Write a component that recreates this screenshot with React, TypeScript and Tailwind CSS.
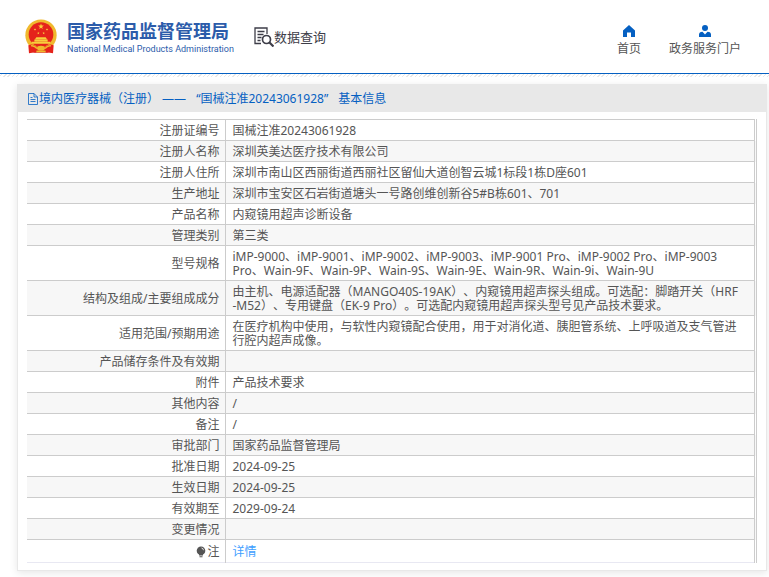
import React from "react";

interface Field {
  label: string;
  value: string;
}

const fields: Field[] = [
  { label: "注册证编号", value: "国械注准20243061928" },
  { label: "注册人名称", value: "深圳英美达医疗技术有限公司" },
  {
    label: "注册人住所",
    value: "深圳市南山区西丽街道西丽社区留仙大道创智云城1标段1栋D座601",
  },
  {
    label: "生产地址",
    value: "深圳市宝安区石岩街道塘头一号路创维创新谷5#B栋601、701",
  },
  { label: "产品名称", value: "内窥镜用超声诊断设备" },
  { label: "管理类别", value: "第三类" },
  {
    label: "型号规格",
    value:
      "iMP-9000、iMP-9001、iMP-9002、iMP-9003、iMP-9001 Pro、iMP-9002 Pro、iMP-9003\nPro、Wain-9F、Wain-9P、Wain-9S、Wain-9E、Wain-9R、Wain-9i、Wain-9U",
  },
  {
    label: "结构及组成/主要组成成分",
    value:
      "由主机、电源适配器（MANGO40S-19AK）、内窥镜用超声探头组成。可选配：脚踏开关（HRF\n-M52）、专用键盘（EK-9 Pro）。可选配内窥镜用超声探头型号见产品技术要求。",
  },
  {
    label: "适用范围/预期用途",
    value:
      "在医疗机构中使用，与软性内窥镜配合使用，用于对消化道、胰胆管系统、上呼吸道及支气管进行腔内超声成像。",
  },
  { label: "产品储存条件及有效期", value: "" },
  { label: "附件", value: "产品技术要求" },
  { label: "其他内容", value: "/" },
  { label: "备注", value: "/" },
  { label: "审批部门", value: "国家药品监督管理局" },
  { label: "批准日期", value: "2024-09-25" },
  { label: "生效日期", value: "2024-09-25" },
  { label: "有效期至", value: "2029-09-24" },
  { label: "变更情况", value: "" },
];

const star = "M0-10 2.4-3.2 9.5-3 3.8 1.3 5.9 8 0 4-5.9 8-3.8 1.3-9.5-3-2.4-3.2Z";

const Emblem: React.FC = () => (
  <svg viewBox="0 0 96 104" className="h-[35px] w-8 shrink-0" aria-hidden="true">
    <path d="M12 72 14 102 Q24 97 34 101 L62 101 Q72 97 82 102 L84 72Z" fill="#d9201c" />
    <circle cx="48" cy="48" r="47" fill="#f0b92e" />
    <circle cx="48" cy="46" r="37" fill="#e5231b" />
    <path d={star} transform="translate(48 22) scale(.9)" fill="#f8cf3c" />
    <path d={star} transform="translate(30 31) scale(.4)" fill="#f8cf3c" />
    <path d={star} transform="translate(66 31) scale(.4)" fill="#f8cf3c" />
    <path d={star} transform="translate(40 42) scale(.4)" fill="#f8cf3c" />
    <path d={star} transform="translate(56 42) scale(.4)" fill="#f8cf3c" />
    <path d="M34 54h28l4 6H30zM28 61h40v6H28zM20 68h56v6H20z" fill="#f8cf3c" />
    <path d="M10 78 Q24 72 34 82 L48 78 62 82 Q72 72 86 78 L84 102 Q74 98 64 101 L62 94 H34 L32 101 Q22 98 12 102Z" fill="#e5231b" />
    <path d="M18 80 Q28 78 36 88 M78 80 Q68 78 60 88" stroke="#f0b92e" strokeWidth="4" fill="none" />
    <ellipse cx="48" cy="87" rx="12" ry="7" fill="#f0b92e" />
    <path d="M34 97h28" stroke="#f0b92e" strokeWidth="5" />
  </svg>
);

const SearchDocIcon: React.FC = () => (
  <svg viewBox="0 0 20 20" className="h-5 w-5 shrink-0" fill="none" stroke="#3d3d48" aria-hidden="true">
    <path d="M7 16.5H1V1h12v6M3.5 4.5h7M3.5 7.5h6M3.5 10.5h4M3.5 13.5h3" strokeWidth="1.3" />
    <circle cx="12.5" cy="12.5" r="4" strokeWidth="1.7" />
    <path d="m15.5 15.5 4 4" strokeWidth="2.2" />
  </svg>
);

const HomeIcon: React.FC = () => (
  <svg viewBox="0 0 12 12" className="h-3 w-3" fill="#0560c2" aria-hidden="true">
    <path d="M6 0 12 5.5V12H8V7.5H4V12H0V5.5Z" />
  </svg>
);

const UserIcon: React.FC = () => (
  <svg viewBox="0 0 12 12" className="h-3 w-3" fill="#0560c2" aria-hidden="true">
    <circle cx="6" cy="3" r="3" />
    <path d="M0 12V9.5Q0 7 3.5 6.7L6 9.5 8.5 6.7Q12 7 12 9.5V12Z" />
  </svg>
);

const FileIcon: React.FC = () => (
  <svg viewBox="0 0 12 12" className="h-3 w-3 shrink-0" fill="none" stroke="#0560c2" strokeWidth=".8" aria-hidden="true">
    <path d="M1.5.5H7L10.5 4v7.5h-9zM7 .5V4h3.5M3.5 4.5h2M3.5 6.5h5M3.5 8.5h5" />
  </svg>
);

const BulbIcon: React.FC = () => (
  <svg viewBox="0 0 10 12" className="h-3 w-[10px]" aria-hidden="true">
    <circle cx="5" cy="4.7" r="4.3" fill="#555" />
    <path d="M3 8h4v1.5H3zM3.5 10.3h3v1h-3z" fill="#555" />
    <path d="M5.5 2q1.8.3 2 2.2" stroke="#fff" strokeWidth=".8" fill="none" />
  </svg>
);

const App: React.FC = () => {
  return (
    <div className="min-h-screen bg-white font-['Noto_Sans','Noto_Sans_CJK_SC',sans-serif] text-xs text-[#555] [text-spacing-trim:space-all]">
      {/* Header */}
      <header>
        <div className="flex h-[73px] items-center justify-between pr-7 pl-[25px]">
          <div className="flex items-center">
            <a href="#" className="flex items-center gap-[10px] text-[#2c5caa]">
              <Emblem />
              <span className="flex flex-col whitespace-nowrap">
                <span className="text-[18px] leading-6 font-bold">国家药品监督管理局</span>
                <span className="font-[Roboto,sans-serif] text-[9px] leading-3 font-normal">
                  National Medical Products Administration
                </span>
              </span>
            </a>
            <h1 className="ml-5 flex items-center text-[13px] leading-5 whitespace-nowrap text-[#3d3d48]">
              <SearchDocIcon />
              数据查询
            </h1>
          </div>
          <nav className="flex gap-7 pt-2">
            <a href="#" className="flex flex-col items-center gap-1">
              <HomeIcon />
              <span className="leading-4">首页</span>
            </a>
            <a href="#" className="flex flex-col items-center gap-1">
              <UserIcon />
              <span className="leading-4">政务服务门户</span>
            </a>
          </nav>
        </div>
        <div className="h-1 border-t border-[#0560c2] bg-[repeating-linear-gradient(135deg,#fff_0_1px,#e8e8e8_1px_2px,#fff_2px_3px)]" />
      </header>

      {/* Registration record */}
      <main className="mt-[7px] mr-[2px] ml-[17px] border border-[#e8e8e8] shadow-[0_2px_8px_rgba(0,0,0,0.1)]">
        <h2 className="flex h-[27px] items-center bg-[#e8e8e8] pl-[9px] text-[#0560c2]">
          <FileIcon />
          <span className="flex gap-[10px]">
            <span>境内医疗器械（注册） ——</span>
            <span>“国械注准20243061928”</span>
            <span>基本信息</span>
          </span>
        </h2>
        <div className="px-[9px] py-[7px]">
          <table className="w-full border-collapse border-r-[3px] border-double border-[#ccc] leading-[14px]">
            <tbody>
              {fields.map((field) => (
                <tr key={field.label} className="border-y border-solid border-[#ccc] even:bg-[#f7f7f7]">
                  <th
                    scope="row"
                    className="w-[198px] border-r border-solid border-[#ccc] px-[5px] pt-1 pb-[2px] text-right font-normal"
                  >
                    {field.label}
                  </th>
                  <td className="pt-1 pr-[10px] pb-[2px] pl-[7px] whitespace-pre-line">{field.value}</td>
                </tr>
              ))}
              <tr className="border-b border-solid border-b-[#e8e8f2]">
                <th
                  scope="row"
                  className="h-[23px] border-r border-solid border-[#ccc] px-[5px] pt-1 pb-[2px] text-right font-normal"
                >
                  <span className="flex items-center justify-end gap-px">
                    <BulbIcon />注
                  </span>
                </th>
                <td className="pt-1 pr-[10px] pb-[2px] pl-[7px]">
                  <a href="#" className="text-[#409eff]">
                    详情
                  </a>
                </td>
              </tr>
            </tbody>
          </table>
        </div>
      </main>
    </div>
  );
};

export default App;
